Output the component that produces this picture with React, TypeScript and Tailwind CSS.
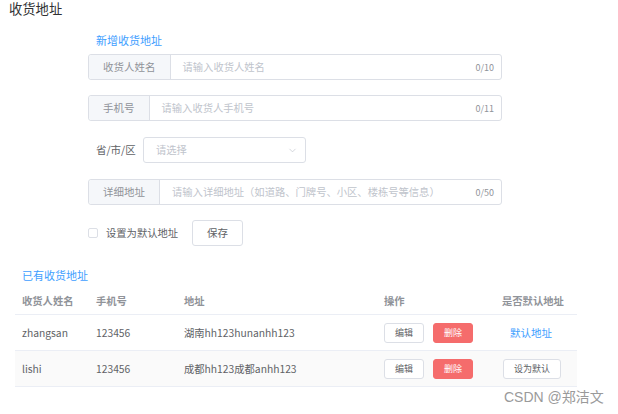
import { ChevronDown } from "lucide-react";

const font = "font-['Noto_Sans_CJK_SC','Noto_Sans',sans-serif]";

function InputGroup({ label, placeholder, count }: { label: string; placeholder: string; count: string }) {
  return (
    <div className="flex h-[26px] w-[414px] rounded-[3px] border border-[#dcdfe6] text-[10.5px] leading-none">
      <div className="flex items-center rounded-l-[3px] border-r border-[#dcdfe6] bg-[#f5f7fa] px-[14px] text-[#909399]">
        {label}
      </div>
      <div className="flex flex-1 items-center justify-between pl-[12px] pr-[7px]">
        <span className="text-[#c0c4cc] text-[10.3px] whitespace-nowrap">{placeholder}</span>
        <span className="text-[9px] text-[#909399]">{count}</span>
      </div>
    </div>
  );
}

const rows = [
  { name: "zhangsan", phone: "123456", addr: "湖南hh123hunanhh123", isDefault: true },
  { name: "lishi", phone: "123456", addr: "成都hh123成都anhh123", isDefault: false },
];

export default function App() {
  return (
    <div className={`relative h-[414px] w-[618px] overflow-hidden bg-white ${font}`}>
      <h1 className="h-[18px] pl-[9px] text-[13.3px] leading-[18px] text-[#303133]">收货地址</h1>

      <div className="flex flex-col pl-[88px]">
        <div className="mt-[15px] pl-[8px] text-[11px] leading-[14px] text-[#409eff]">新增收货地址</div>

        <div className="mt-[7px]">
          <InputGroup label="收货人姓名" placeholder="请输入收货人姓名" count="0/10" />
        </div>
        <div className="mt-[15px]">
          <InputGroup label="手机号" placeholder="请输入收货人手机号" count="0/11" />
        </div>

        <div className="mt-[16px] flex h-[26px] items-center">
          <span className="w-[55px] pl-[8px] text-[10.5px] text-[#606266]">省/市/区</span>
          <div className="flex h-[26px] w-[163px] items-center justify-between rounded-[3px] border border-[#dcdfe6] pl-[12px] pr-[7px]">
            <span className="text-[10.3px] text-[#c0c4cc]">请选择</span>
            <ChevronDown size={11} strokeWidth={1.5} className="text-[#c0c4cc]" />
          </div>
        </div>

        <div className="mt-[16px]">
          <InputGroup
            label="详细地址"
            placeholder="请输入详细地址（如道路、门牌号、小区、楼栋号等信息）"
            count="0/50"
          />
        </div>

        <div className="mt-[15px] flex h-[26px] items-center">
          <span className="h-[10px] w-[10px] rounded-[2px] border border-[#dcdfe6]" />
          <span className="ml-[8px] text-[10.3px] text-[#606266]">设置为默认地址</span>
          <button className="ml-[14px] h-[26px] w-[51px] rounded-[3px] border border-[#dcdfe6] text-[10.5px] text-[#606266]">
            保存
          </button>
        </div>
      </div>

      <div className="mt-[22px] pl-[22px] text-[11px] leading-[14px] text-[#409eff]">已有收货地址</div>

      <div className="ml-[15px] mt-[5px] w-[562px] text-[10.3px]">
        <div className="flex h-[28px] items-center border-b border-[#ebeef5] font-bold text-[#909399]">
          <div className="w-[74px] pl-[7px]">收货人姓名</div>
          <div className="w-[88px] pl-[7px]">手机号</div>
          <div className="w-[200px] pl-[7px]">地址</div>
          <div className="w-[118px] pl-[7px]">操作</div>
          <div className="w-[82px] pl-[7px]">是否默认地址</div>
        </div>
        {rows.map((r, i) => (
          <div
            key={r.name}
            className={`flex h-[36px] items-center border-b border-[#ebeef5] text-[#606266] ${i === 1 ? "bg-[#fafafa]" : ""}`}
          >
            <div className="w-[74px] pl-[7px]">{r.name}</div>
            <div className="w-[88px] pl-[7px]">{r.phone}</div>
            <div className="w-[200px] pl-[7px]">{r.addr}</div>
            <div className="flex w-[118px] gap-[9px] pl-[7px]">
              <button className="h-[20px] w-[40px] rounded-[3px] border border-[#dcdfe6] bg-white text-[9px] text-[#606266]">
                编辑
              </button>
              <button className="h-[20px] w-[40px] rounded-[3px] border border-[#f56c6c] bg-[#f56c6c] text-[9px] text-white">
                删除
              </button>
            </div>
            <div className="w-[82px] pl-[8px]">
              {r.isDefault ? (
                <span className="ml-[7px] text-[10.5px] text-[#409eff]">默认地址</span>
              ) : (
                <button className="h-[20px] w-[58px] rounded-[3px] border border-[#dcdfe6] bg-white text-[9px] text-[#606266]">
                  设为默认
                </button>
              )}
            </div>
          </div>
        ))}
      </div>

      <div className="absolute left-[504px] top-[387px] font-['Liberation_Sans','Noto_Sans_CJK_SC',sans-serif] text-[14px] text-[#9a9a9a]">
        CSDN @郑洁文
      </div>
    </div>
  );
}
